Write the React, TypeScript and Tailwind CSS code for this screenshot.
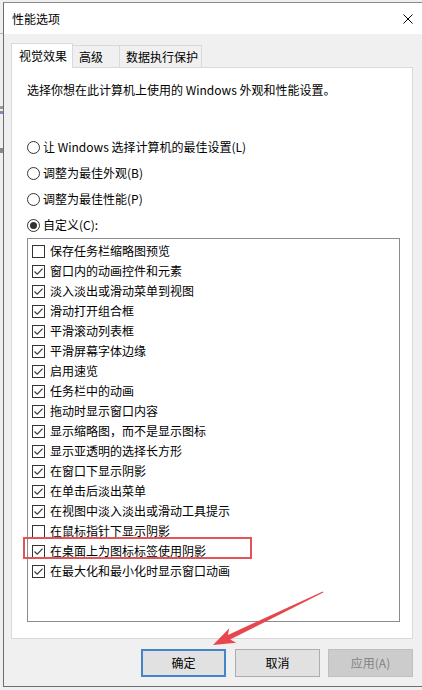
import React from "react";

const items: [string, boolean][] = [
  ["保存任务栏缩略图预览", false],
  ["窗口内的动画控件和元素", true],
  ["淡入淡出或滑动菜单到视图", true],
  ["滑动打开组合框", true],
  ["平滑滚动列表框", true],
  ["平滑屏幕字体边缘", true],
  ["启用速览", true],
  ["任务栏中的动画", true],
  ["拖动时显示窗口内容", true],
  ["显示缩略图，而不是显示图标", true],
  ["显示亚透明的选择长方形", true],
  ["在窗口下显示阴影", true],
  ["在单击后淡出菜单", true],
  ["在视图中淡入淡出或滑动工具提示", true],
  ["在鼠标指针下显示阴影", false],
  ["在桌面上为图标标签使用阴影", true],
  ["在最大化和最小化时显示窗口动画", true],
];

const radios = [
  "让 Windows 选择计算机的最佳设置(L)",
  "调整为最佳外观(B)",
  "调整为最佳性能(P)",
  "自定义(C):",
];

function CheckBox({ checked }: { checked: boolean }) {
  return (
    <span className="w-[13px] h-[13px] border border-[#333333] bg-white shrink-0 flex items-center justify-center">
      {checked && (
        <svg width="11" height="11" viewBox="0 0 11 11">
          <path d="M1.5 5.5 L4.2 8.2 L9.6 2.6" fill="none" stroke="#333333" strokeWidth="1.1" />
        </svg>
      )}
    </span>
  );
}

function Radio({ selected }: { selected: boolean }) {
  return (
    <span className="w-[13px] h-[13px] rounded-full border border-[#333333] bg-white shrink-0 flex items-center justify-center">
      {selected && <span className="w-[7px] h-[7px] rounded-full bg-[#333333]" />}
    </span>
  );
}

export default function App() {
  return (
    <div className="relative w-[422px] h-[690px] bg-[#efefef] flex pt-[2px] overflow-hidden font-['Noto_Sans_CJK_SC',sans-serif] text-[12px] text-black">
      {/* desktop sliver at the left */}
      <div className="w-[3px] flex flex-col">
        <div className="h-[31px]" />
        <div className="h-px bg-[#b5b5b5]" />
        <div className="h-[72px]" />
        <div className="h-[3px] bg-[#9a9a9a]" />
        <div className="h-[2px]" />
        <div className="h-[3px] bg-[#7a8fc0]" />
        <div className="h-[34px]" />
        <div className="h-[5px] bg-[#8a8a8a]" />
      </div>

      {/* window */}
      <div className="w-[419px] h-[685px] border-l border-t border-b border-l-[#6e6e6e] border-t-[#8a8a8a] border-b-[#6e6e6e] bg-[#f0f0f0] flex flex-col">
        <div className="h-[31px] bg-white flex items-center justify-between pl-[8px] pr-[9px]">
          <span className="leading-[16px]">性能选项</span>
          <svg width="10" height="10" viewBox="0 0 10 10">
            <path d="M0.5 0.5 L9.5 9.5 M9.5 0.5 L0.5 9.5" stroke="#000000" strokeWidth="1" />
          </svg>
        </div>

        <div className="flex-1 flex flex-col pl-[7px] pr-[9px] pt-[9px]">
          {/* tabs */}
          <div className="flex items-end h-[24px] relative z-10">
            <div className="h-[25px] -mb-px w-[62px] bg-white border border-b-0 border-[#d9d9d9] flex items-center pl-[7px] pb-[1px] leading-[16px]">
              视觉效果
            </div>
            <div className="h-[22px] w-[48px] -ml-px bg-[#f0f0f0] border border-b-0 border-[#d9d9d9] flex items-center pl-[6px] leading-[16px]">
              高级
            </div>
            <div className="h-[22px] w-[83px] -ml-px bg-[#f0f0f0] border border-b-0 border-[#d9d9d9] flex items-center pl-[6px] leading-[16px]">
              数据执行保护
            </div>
          </div>

          {/* panel */}
          <div className="w-[402px] h-[572px] bg-white border border-[#d9d9d9] pl-[15px] pt-[14px]">
            <p className="leading-[16px]">选择你想在此计算机上使用的 Windows 外观和性能设置。</p>

            <div className="mt-[36px] flex flex-col">
              {radios.map((r, i) => (
                <div key={r} className="h-[26px] flex items-center gap-[3px]">
                  <Radio selected={i === 3} />
                  <span className="leading-[16px]">{r}</span>
                </div>
              ))}
            </div>

            <div className="relative w-[373px] h-[384px] border border-[#8c8c8c] pt-[2px] pl-[4px]">
              {items.map(([label, checked]) => (
                <div key={label} className="h-[20px] flex items-center gap-[5px]">
                  <CheckBox checked={checked} />
                  <span className="leading-[16px]">{label}</span>
                </div>
              ))}
              <div className="absolute left-[-5px] top-[298px] w-[229px] h-[22px] border-2 border-[#e5535a]" />
            </div>
          </div>

          {/* buttons */}
          <div className="flex mt-[10px] ml-[130px]">
            <button className="w-[86px] h-[28px] bg-[#e1e1e1] border-2 border-[#4584c6] flex items-center justify-center leading-[16px]">
              确定
            </button>
            <button className="ml-[9px] w-[86px] h-[28px] bg-[#e1e1e1] border border-[#adadad] flex items-center justify-center leading-[16px]">
              取消
            </button>
            <button className="ml-[8px] w-[86px] h-[28px] bg-[#cccccc] border border-[#bfbfbf] text-[#838383] flex items-center justify-center leading-[16px]">
              应用(A)
            </button>
          </div>
        </div>
      </div>

      {/* annotation arrow */}
      <svg className="absolute left-0 top-0 pointer-events-none" width="422" height="690" viewBox="0 0 422 690">
        <polygon
          points="322.8,591.5 227.9,635.0 229.3,628.3 213,645 236.3,642.7 230.1,639.6 323.3,592.5"
          fill="#e8464e"
        />
      </svg>
    </div>
  );
}
